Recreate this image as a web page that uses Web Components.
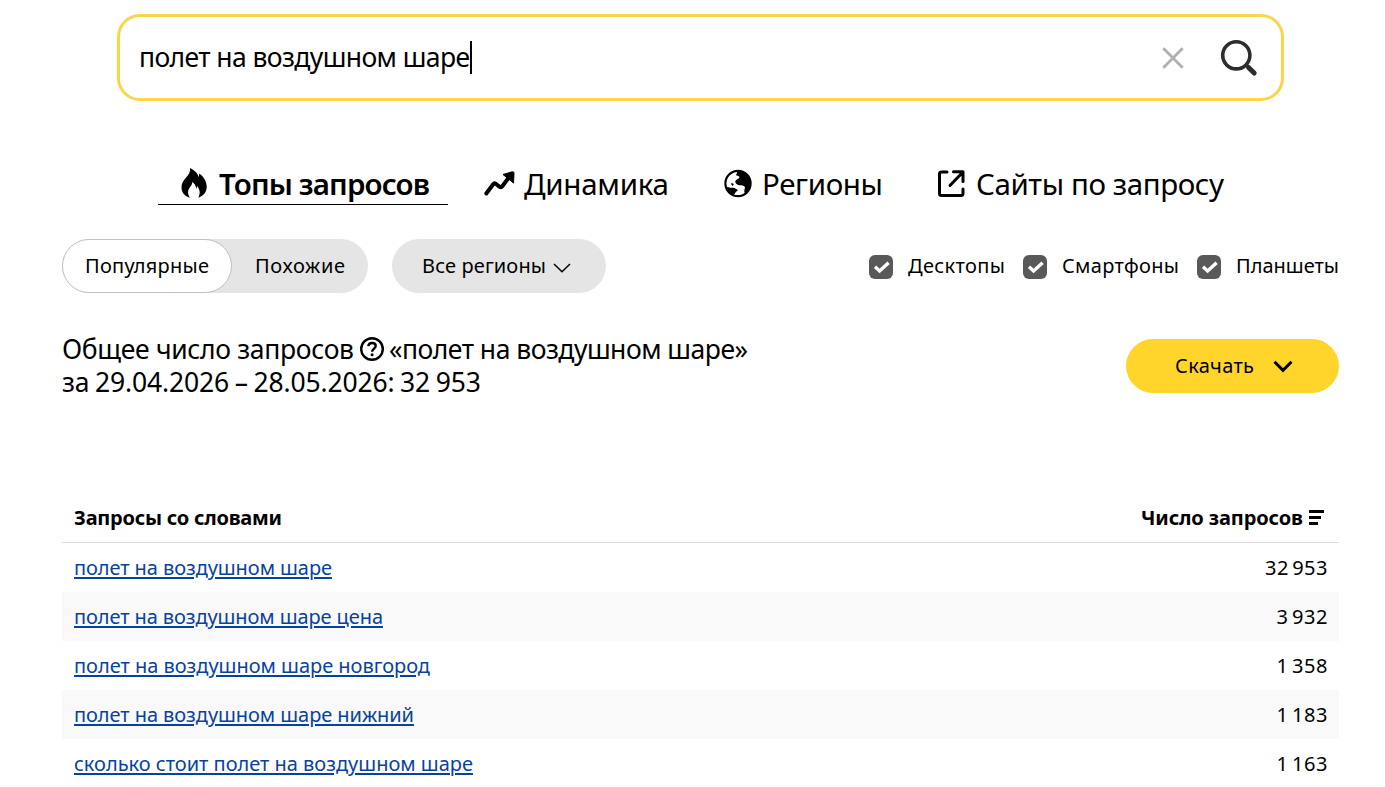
<!DOCTYPE html>
<html lang="ru">
<head>
<meta charset="utf-8">
<title>Вордстат</title>
<style>
html,body{margin:0;height:788px;overflow:hidden;background:#fff;color:#000;font-family:"Noto Sans","Open Sans",sans-serif}
</style>
</head>
<body>
<ws-app></ws-app>
<script>
const define = (name, html, setup) => {
  const tpl = document.createElement('template');
  tpl.innerHTML = html;
  customElements.define(name, class extends HTMLElement {
    connectedCallback() {
      if (this.shadowRoot) return;
      this.attachShadow({mode: 'open'}).appendChild(tpl.content.cloneNode(true));
      if (setup) setup(this, this.shadowRoot);
    }
  });
};

/* Tracks its text so that it occupies the width in "w". */
define('ws-text', `<style>
:host{display:inline-block;white-space:nowrap;flex:none}
span{display:inline-block;white-space:pre}
:host([link]) span{color:#0842a0;text-decoration:underline;text-decoration-thickness:2px;text-underline-offset:2px}
</style><span><slot></slot></span>`, (el, root) => {
  const s = root.querySelector('span'), w = +el.getAttribute('w');
  const n = el.textContent.length;
  const nat = s.getBoundingClientRect().width;
  const ls = (w - nat) / (n - 1);
  s.style.letterSpacing = ls.toFixed(3) + 'px';
  s.style.marginRight = (-ls).toFixed(3) + 'px';
  el.style.width = w + 'px';
});

define('ws-search', `<style>
:host{display:flex;align-items:center;box-sizing:border-box;width:1167px;height:87px;margin-left:117px;border:3px solid #f8d648;border-radius:23px;padding:0 23px 0 19px;font-size:26.500px;line-height:36px}
ws-text{padding-bottom:2px}
.caret{width:2px;height:33px;background:#000;margin-right:auto}
.x{margin-right:36px}
svg{display:block}
</style><ws-text w="331">полет на воздушном шаре</ws-text><div class="caret"></div>
<svg class="x" width="22" height="22" viewBox="0 0 22 22"><path d="M1.3 1.3 20.7 20.7M20.7 1.3 1.3 20.7" stroke="#b0b0b0" stroke-width="2.8"/></svg>
<svg width="38" height="38" viewBox="0 0 38 38" fill="none" stroke="#2d2d2f"><circle cx="16.3" cy="16.3" r="13.6" stroke-width="3.600"/><path d="M28.5 28.5 34.200 34" stroke-width="5" stroke-linecap="round"/></svg>`);

define('ws-tab', `<style>
:host{display:flex;align-items:center;box-sizing:border-box;height:41px;font-size:29.500px;line-height:39px;border-bottom:1px solid transparent}
:host([active]){border-color:#000;font-weight:600}
</style><slot name="icon"></slot><slot></slot>`);

define('ws-tabs', `<style>
:host{display:flex;margin:63px 0 0 158px}
svg{display:block;flex:none}
ws-text{padding-bottom:1px}
.a{width:290px;padding-left:23px}
.b{margin-left:36px}.c{margin-left:55px}.d{margin-left:54px}
</style>
<ws-tab class="a" active><svg slot="icon" width="26" height="30" viewBox="0 0 27 31" preserveAspectRatio="none" style="margin:0 12px 2px 0"><path d="M9.5 0C16 3.4 17.8 6.700 18.200 9.500 18.700 8 19 6.800 18.700 5.600 23 8 26.700 13.500 26.700 19.500 26.700 25 23.500 29 18 30.700 18.700 28.500 19.800 26.800 19.300 24 19 21.800 17.700 20.500 17.200 18.500 16.500 19.800 16.200 20.500 15.800 21.500 15.700 18.500 14 16 11.600 14.500 12 18 8.500 20 7.500 23.500 6.900 26 7.800 28.500 9.200 30.700 4 29.500 0.500 25.500 0.500 20 0.500 11 10.500 8.500 9.500 0Z"/></svg><ws-text w="211">Топы запросов</ws-text></ws-tab>
<ws-tab class="b"><svg slot="icon" width="31" height="28" viewBox="0 0 31 28" style="margin-right:9px"><path d="M2.300 23.500 9.200 14.200Q10.300 12.800 12 14L15.700 16.800Q17.200 17.700 18.300 16.300L24.500 8" fill="none" stroke="#000" stroke-width="4" stroke-linecap="round" stroke-linejoin="round"/><path d="M19 4.500 28.500 1.700Q30 1.500 30 3.200L29.500 13Z" stroke="#000" stroke-linejoin="round"/></svg><ws-text w="145">Динамика</ws-text></ws-tab>
<ws-tab class="c"><svg slot="icon" width="28" height="31" viewBox="0 0 28 31" style="margin-right:10px"><circle cx="14" cy="14.500" r="12.600" fill="none" stroke="#000" stroke-width="2.200"/><path d="M12.500 2C20 1 26.700 7 26.700 14.500 26.700 19 24.500 22.500 21 24.800 19.500 22.500 20.700 20.500 21 18 19.500 16 17.500 16.800 15.500 16.300 13 15.700 11 14.500 11.300 12.300 11.800 10.500 14 10.300 15.300 8.800 16 7.300 14 7 12 6.300 12.500 4.500 14 3.500 12.500 2ZM1.800 17.500C4 18 6 19 8.500 18.800 11 19 13.200 20 13.800 21.800 12 22.500 11.500 23.500 10.500 25 9 25.500 7.500 25 6.500 24.500 4 22.500 2.300 20.500 1.800 17.500ZM6.800 14.500Q9 13.500 9.800 15.500L8.300 17Z"/></svg><ws-text w="121">Регионы</ws-text></ws-tab>
<ws-tab class="d"><svg slot="icon" width="29" height="31" viewBox="0 0 29 31" style="margin-right:10px"><path d="M10 3H4.500Q2.500 3 2.500 5V24.500Q2.500 26.500 4.500 26.500H24Q26 26.500 26 24.500V20M13 16.500 25 4M16.500 2.800H26V12.500" fill="none" stroke="#000" stroke-width="3" stroke-linecap="round" stroke-linejoin="round"/></svg><ws-text w="248">Сайты по запросу</ws-text></ws-tab>`);

define('ws-check', `<style>
:host{display:flex;align-items:center;gap:15px}
.box{display:flex;width:24px;height:24px;border-radius:6px;background:#595959;margin-top:2px}
</style><div class="box"><svg width="24" height="24"><path d="M6 11.700 10.600 16 19.600 7.700" stroke="#fff" stroke-width="3.400" fill="none"/></svg></div><slot></slot>`);

define('ws-filters', `<style>
:host{display:flex;align-items:center;height:54px;margin:34px 46px 0 62px;font-size:20px;line-height:54px}
.seg{display:flex;width:306px;height:54px;border-radius:27px;background:#e5e5e5}
.on{box-sizing:border-box;width:170px;height:54px;border:1px solid #c1c1c1;border-radius:27px;background:#fff;padding-left:22px;line-height:52px;margin-right:23px}
.pill{display:flex;align-items:center;box-sizing:border-box;width:214px;height:54px;border-radius:27px;background:#e5e5e5;margin-left:24px;padding-left:30px;gap:7px}
.pill svg{margin-top:3px}
.checks{display:flex;gap:18px;margin-left:auto}
</style><div class="seg"><div class="on"><ws-text w="124">Популярные</ws-text></div><ws-text w="90">Похожие</ws-text></div>
<div class="pill"><ws-text w="124">Все регионы</ws-text><svg width="18" height="10"><path d="M1 1 9 8.800 17 1" stroke="#000" stroke-width="1.500" fill="none"/></svg></div>
<div class="checks"><ws-check><ws-text w="97">Десктопы</ws-text></ws-check><ws-check><ws-text w="117">Смартфоны</ws-text></ws-check><ws-check><ws-text w="103">Планшеты</ws-text></ws-check></div>`);

define('ws-summary', `<style>
:host{display:flex;justify-content:space-between;margin:40px 46px 0 62px;font-size:26.500px;line-height:33px}
.line{display:flex;align-items:center;height:33px}
.date{word-spacing:-1px}
.btn{display:flex;align-items:center;box-sizing:border-box;width:213px;height:54px;border-radius:27px;background:#ffd52b;margin-top:6px;padding-left:49px;gap:19px;font-size:20px}
.btn ws-text{padding-bottom:2px}
.q{margin:0 5px 2px 6px}
</style><div><div class="line"><ws-text w="292">Общее число запросов</ws-text><svg class="q" width="24" height="24" viewBox="0 0 24 24" fill="none" stroke="#000"><circle cx="12" cy="12" r="10.800" stroke-width="2.400"/><path d="M8.300 9.200C8.600 7 10.200 6 12.100 6 14.200 6 15.700 7.200 15.700 9 15.700 11.500 12.200 11.800 12.100 14.800" stroke-width="2.400"/><circle cx="12.100" cy="17.700" r="1.500" fill="#000" stroke="none"/></svg><ws-text w="359">«полет на воздушном шаре»</ws-text></div>
<div class="line date"><ws-text w="419">за 29.04.2026 – 28.05.2026: 32 953</ws-text></div></div>
<div class="btn"><ws-text w="79">Скачать</ws-text><svg width="20" height="13"><path d="M1.500 1.800 10 10.300 18.500 1.800" stroke="#000" stroke-width="3" fill="none"/></svg></div>`);

define('ws-row', `<style>
:host{display:flex;align-items:center;justify-content:space-between;box-sizing:border-box;height:49px;padding:0 11.500px 0 12px;line-height:49px;font-size:20px}
:host(:nth-of-type(even)){background:#f9f9f9}
.n{word-spacing:-2.500px}
</style><div class="q"><slot></slot></div><div class="n"><slot name="count"></slot></div>`);

define('ws-table', `<style>
:host{display:block;margin:95px 46px 0 62px;font-size:20px}
.head{display:flex;align-items:center;box-sizing:border-box;height:49px;padding:0 15px 0 12px;border-bottom:1px solid #ddd;font-weight:700}
.head ws-text{padding-bottom:2px}
.r{display:flex;align-items:center;gap:5px;margin-left:auto}
</style><div class="head"><ws-text w="208">Запросы со словами</ws-text><div class="r"><ws-text w="162">Число запросов</ws-text><svg width="16" height="16"><path d="M1 1.500H16M1 7.500H13M1 13.500H10" stroke="#000" stroke-width="3"/></svg></div></div>
<div class="rows"></div>`, (el, root) => {
  const data = [['полет на воздушном шаре', 258, '32 953', 62.5], ['полет на воздушном шаре цена', 309, '3 932', 51], ['полет на воздушном шаре новгород', 356, '1 358', 51], ['полет на воздушном шаре нижний', 340, '1 183', 51], ['сколько стоит полет на воздушном шаре', 399, '1 163', 51]];
  root.querySelector('.rows').innerHTML = data.map(d => `<ws-row><ws-text link w="${d[1]}">${d[0]}</ws-text><ws-text slot="count" w="${d[3]}">${d[2]}</ws-text></ws-row>`).join('');
});

define('ws-app', `<style>
:host{display:flex;flex-direction:column;box-sizing:border-box;height:788px;padding-top:14px;position:relative;overflow:hidden}
ws-search,ws-tabs,ws-filters,ws-summary,ws-table{flex:none}
.edge{position:absolute;left:0;right:0;bottom:0;height:1px;background:#ddd}
</style><ws-search></ws-search><ws-tabs></ws-tabs><ws-filters></ws-filters><ws-summary></ws-summary><ws-table></ws-table><div class="edge"></div>`);
</script>
</body>
</html>
